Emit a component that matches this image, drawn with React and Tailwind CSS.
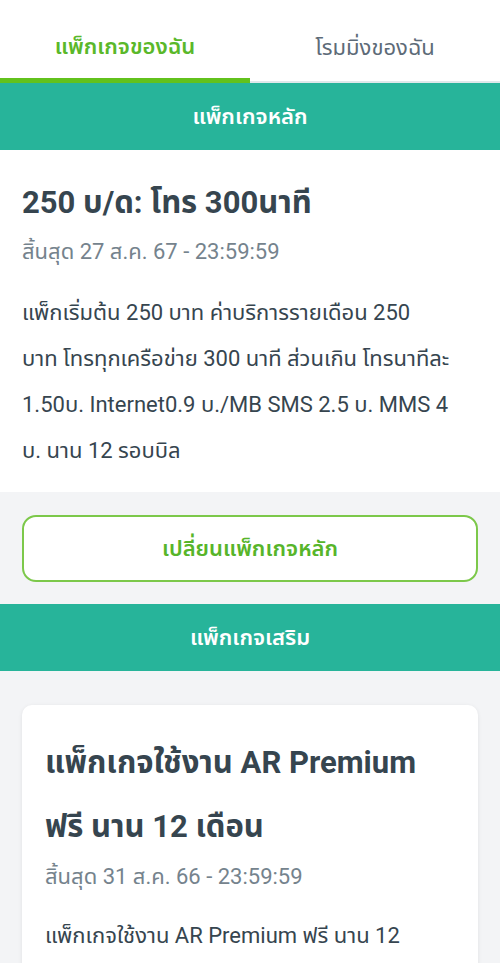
import React from 'react'

const font = { fontFamily: 'Roboto, "Noto Sans Thai", "Noto Sans", sans-serif' }

function SectionBar({ children }) {
  return (
    <div className="flex h-[67px] items-center justify-center bg-[#27b49a] text-[22px] font-semibold text-white">
      {children}
    </div>
  )
}

// forced lines so the wrap matches the design
function Lines({ lines, className }) {
  return (
    <div className={className}>
      {lines.map((l) => (
        <div key={l} className="whitespace-nowrap">
          {l}
        </div>
      ))}
    </div>
  )
}

export default function App() {
  return (
    <div className="min-h-screen w-[500px] overflow-hidden bg-[#f3f4f6] text-[#36454f]" style={font}>
      {/* tabs */}
      <div className="flex h-[83px] bg-white">
        <div className="flex flex-1 flex-col">
          <div className="flex flex-1 items-center justify-center pt-[14px] text-[22px] font-semibold text-[#5ab82a]">
            แพ็กเกจของฉัน
          </div>
          <div className="h-[5px] bg-[#62c21c]" />
        </div>
        <div className="flex flex-1 flex-col">
          <div className="flex flex-1 items-center justify-center pt-[14px] text-[22px] text-[#5d6b78]">
            โรมมิ่งของฉัน
          </div>
          <div className="h-[2px] bg-[#dfe8ea]" />
        </div>
      </div>

      <SectionBar>แพ็กเกจหลัก</SectionBar>

      {/* main package */}
      <div className="bg-white px-[22px] pb-[18px] pt-[30px]">
        <h1 className="text-[31px] font-bold leading-[46px] text-[#36454f]">250 บ/ด: โทร 300นาที</h1>
        <p className="mt-[8px] text-[22px] leading-[36px] text-[#75838d]">สิ้นสุด 27 ส.ค. 67 - 23:59:59</p>
        <Lines
          className="mt-[20px] text-[22px] leading-[46px] text-[#36454f]"
          lines={[
            'แพ็กเริ่มต้น 250 บาท ค่าบริการรายเดือน 250',
            'บาท โทรทุกเครือข่าย 300 นาที ส่วนเกิน โทรนาทีละ',
            '1.50บ. Internet0.9 บ./MB SMS 2.5 บ. MMS 4',
            'บ. นาน 12 รอบบิล',
          ]}
        />
      </div>

      {/* change button */}
      <div className="px-[22px] pb-[22px] pt-[23px]">
        <button className="flex h-[67px] w-full items-center justify-center rounded-[14px] border-2 border-[#7cc84a] bg-white text-[22px] font-semibold text-[#57b52a]">
          เปลี่ยนแพ็กเกจหลัก
        </button>
      </div>

      <SectionBar>แพ็กเกจเสริม</SectionBar>

      {/* add-on packages */}
      <div className="px-[22px] pt-[34px]">
        <div className="rounded-[10px] bg-white px-[23px] pb-[24px] pt-[26px] shadow-[0_1px_4px_rgba(0,0,0,0.08)]">
          <Lines
            className="text-[31px] font-bold leading-[64px] text-[#36454f]"
            lines={['แพ็กเกจใช้งาน AR Premium', 'ฟรี นาน 12 เดือน']}
          />
          <p className="text-[22px] leading-[36px] text-[#75838d]">สิ้นสุด 31 ส.ค. 66 - 23:59:59</p>
          <Lines
            className="mt-[18px] text-[22px] leading-[46px] text-[#36454f]"
            lines={['แพ็กเกจใช้งาน AR Premium ฟรี นาน 12', 'เดือน']}
          />
        </div>
      </div>
    </div>
  )
}
